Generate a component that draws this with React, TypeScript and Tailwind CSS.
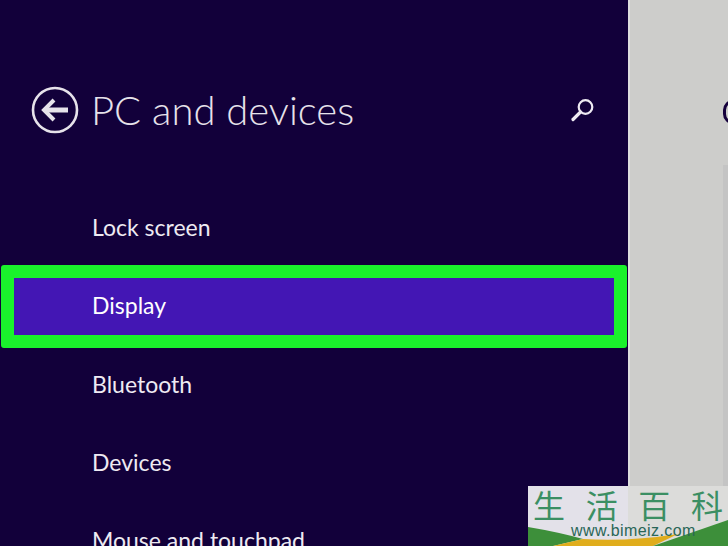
import React from "react";

const items = ["Bluetooth", "Devices", "Mouse and touchpad"];

function Watermark() {
  return (
    <div className="absolute right-0 bottom-0 w-[200px] h-[60px] overflow-hidden flex">
      <div className="w-[100px] bg-[#e3e1e9]" />
      <div className="w-[100px] bg-[#dcdcda]" />
      <svg className="absolute left-0 top-0" width="200" height="60" viewBox="0 0 200 60">
        <path d="M0 41 Q30 46 55 53 L25 60 L0 60 Z" fill="#3d8f3a" />
        <path d="M25 60 L55 53 Q100 56 150 48 L125 60 Z" fill="#e0ad1c" />
        <path d="M125 60 L200 34 L200 60 Z" fill="#3d8f3a" />
      </svg>
      <div className="absolute left-0 top-[2px] w-full flex justify-between px-[5px] text-[32px] leading-[32px] text-[#3b8f63] font-['Noto_Sans_CJK_SC',sans-serif] font-normal">
        <span>生</span>
        <span>活</span>
        <span>百</span>
        <span>科</span>
      </div>
      <div className="absolute left-[43px] top-[36px] text-[16px] leading-[18px] tracking-[0.4px] text-[#2a6657] font-['Liberation_Sans',sans-serif]">
        www.bimeiz.com
      </div>
    </div>
  );
}

export default function App() {
  return (
    <div className="relative flex w-[728px] h-[546px] overflow-hidden font-['Lato',sans-serif] bg-[#cdcdcb]">
      <div className="w-[628px] shrink-0 bg-[#12003a] text-[#eeeaf2] flex flex-col overflow-hidden">
        <div className="flex items-center h-[60px] mt-[80px] pl-[31px] pr-[31px] shrink-0">
          <svg width="48" height="48" viewBox="0 0 48 48" fill="none" className="shrink-0">
            <circle cx="24" cy="24" r="22" stroke="#e6e2ea" strokeWidth="2.6" />
            <path d="M37 24H14" stroke="#e6e2ea" strokeWidth="5" />
            <path d="M23 14L13 24L23 34" stroke="#e6e2ea" strokeWidth="4" />
          </svg>
          <h1 className="ml-[12px] text-[40px] leading-[60px] font-light text-[#e6e2ea]">PC and devices</h1>
          <svg width="28" height="28" viewBox="0 0 28 28" fill="none" className="ml-auto shrink-0">
            <circle cx="16.5" cy="11" r="6.8" stroke="#eeeaf2" strokeWidth="2.2" />
            <path d="M11.5 16L4 23.5" stroke="#eeeaf2" strokeWidth="3.2" strokeLinecap="round" />
          </svg>
        </div>
        <div className="h-[78px] mt-[48px] shrink-0 flex items-center pl-[92px] text-[23px]">Lock screen</div>
        <div className="h-[83px] mt-[-1px] mx-[1px] shrink-0 rounded-[3px] border-[13px] border-[#1af12c] bg-[#4316b4] flex items-center pl-[78px] pb-[3px] text-[23px] text-white">
          Display
        </div>
        <div className="-mt-[3px] flex flex-col">
          {items.map((t) => (
            <div key={t} className="h-[78px] shrink-0 flex items-center pl-[92px] text-[23px]">{t}</div>
          ))}
        </div>
      </div>
      <div className="flex-1 relative border-l-2 border-[#dedede]">
        <div className="absolute left-[93px] top-[100px] w-[20px] h-[24px] rounded-full border-[3px] border-[#15003c]" />
        <div className="absolute left-[93px] top-[165px] w-[20px] h-[381px] bg-[#c4c4c4]" />
      </div>
      <Watermark />
    </div>
  );
}
